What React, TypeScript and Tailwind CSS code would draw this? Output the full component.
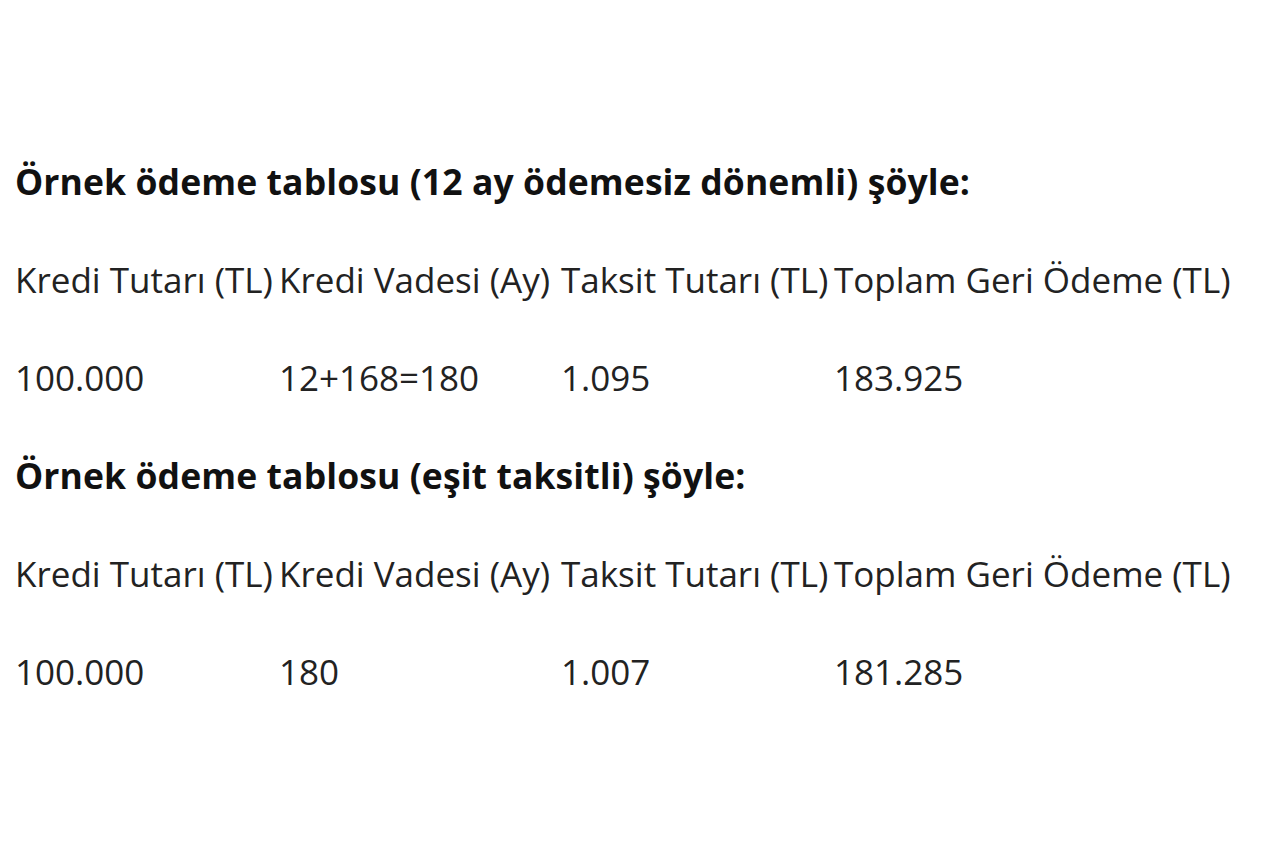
const rows = [
  {
    title: "Örnek ödeme tablosu (12 ay ödemesiz dönemli) şöyle:",
    values: ["100.000", "12+168=180", "1.095", "183.925"],
  },
  {
    title: "Örnek ödeme tablosu (eşit taksitli) şöyle:",
    values: ["100.000", "180", "1.007", "181.285"],
  },
];

const headers = [
  "Kredi Tutarı (TL)",
  "Kredi Vadesi (Ay)",
  "Taksit Tutarı (TL)",
  "Toplam Geri Ödeme (TL)",
];

function Row({ cells }: { cells: string[] }) {
  return (
    <div className="grid h-[98px] grid-cols-[264px_282px_273px_1fr] items-center whitespace-nowrap">
      {cells.map((c, i) => (
        <div key={i}>{c}</div>
      ))}
    </div>
  );
}

export default function App() {
  return (
    <div
      className="min-h-[850px] w-[1280px] bg-white pl-[15px] pt-[133px] text-[35px] text-[#222]"
      style={{ fontFamily: '"Open Sans", "Noto Sans", sans-serif' }}
    >
      {rows.map((r, i) => (
        <div key={i}>
          <div className="flex h-[98px] items-center text-[35.5px] font-bold tracking-[0.1px] text-[#111]">
            {r.title}
          </div>
          <Row cells={headers} />
          <Row cells={r.values} />
        </div>
      ))}
    </div>
  );
}
